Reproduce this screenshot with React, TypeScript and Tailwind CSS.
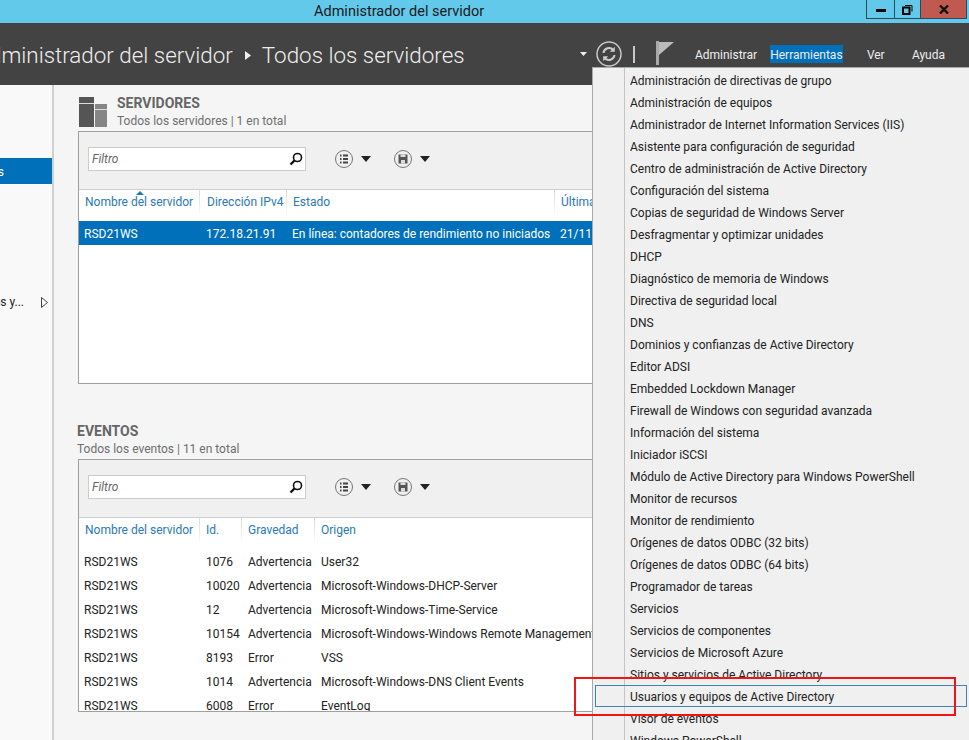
import React from "react";

/* ── data ── */

const toolItems = [
  "Administración de directivas de grupo",
  "Administración de equipos",
  "Administrador de Internet Information Services (IIS)",
  "Asistente para configuración de seguridad",
  "Centro de administración de Active Directory",
  "Configuración del sistema",
  "Copias de seguridad de Windows Server",
  "Desfragmentar y optimizar unidades",
  "DHCP",
  "Diagnóstico de memoria de Windows",
  "Directiva de seguridad local",
  "DNS",
  "Dominios y confianzas de Active Directory",
  "Editor ADSI",
  "Embedded Lockdown Manager",
  "Firewall de Windows con seguridad avanzada",
  "Información del sistema",
  "Iniciador iSCSI",
  "Módulo de Active Directory para Windows PowerShell",
  "Monitor de recursos",
  "Monitor de rendimiento",
  "Orígenes de datos ODBC (32 bits)",
  "Orígenes de datos ODBC (64 bits)",
  "Programador de tareas",
  "Servicios",
  "Servicios de componentes",
  "Servicios de Microsoft Azure",
  "Sitios y servicios de Active Directory",
  "Usuarios y equipos de Active Directory",
  "Visor de eventos",
  "Windows PowerShell",
];

const events = [
  ["1076", "Advertencia", "User32"],
  ["10020", "Advertencia", "Microsoft-Windows-DHCP-Server"],
  ["12", "Advertencia", "Microsoft-Windows-Time-Service"],
  ["10154", "Advertencia", "Microsoft-Windows-Windows Remote Management"],
  ["8193", "Error", "VSS"],
  ["1014", "Advertencia", "Microsoft-Windows-DNS Client Events"],
  ["6008", "Error", "EventLog"],
];

/* ── small drawings ── */

function SearchGlyph() {
  return (
    <svg width="14" height="14" viewBox="0 0 14 14" fill="none" stroke="#111">
      <circle cx="8.5" cy="5.5" r="4" strokeWidth="1.6" />
      <path d="M5.5 8.5 L1.5 12.5" strokeWidth="2.4" />
    </svg>
  );
}

function ListButton() {
  return (
    <svg width="18" height="18" viewBox="0 0 18 18" fill="none">
      <circle cx="9" cy="9" r="8.5" stroke="#777" />
      <path d="M5 5.5h1.5M5 9h1.5M5 12.5h1.5M8 5.5h5M8 9h5M8 12.5h5" stroke="#444" strokeWidth="1.8" />
    </svg>
  );
}

function SaveButton() {
  return (
    <svg width="18" height="18" viewBox="0 0 18 18" fill="none">
      <circle cx="9" cy="9" r="8.5" stroke="#777" />
      <path d="M4.5 4.5h9v9h-9z" fill="#555" />
      <path d="M6.5 4.5h5v2.5h-5zM7 10h4v3.5H7z" fill="#ddd" />
    </svg>
  );
}

function Caret() {
  return (
    <svg width="10" height="6" viewBox="0 0 10 6">
      <path d="M0 0h10L5 6z" fill="#222" />
    </svg>
  );
}

function ServersGlyph() {
  return (
    <svg width="29" height="30" viewBox="0 0 29 30" className="shrink-0">
      <path d="M0 0h15v30H0z" fill="#555" />
      <path d="M0 6h15v1H0z" fill="#ddd" />
      <path d="M16 7h12v23H16z" fill="#858585" />
      <path d="M16 12h12v1H16z" fill="#ddd" />
    </svg>
  );
}

function RefreshGlyph() {
  return (
    <svg width="26" height="26" viewBox="0 0 26 26" fill="none">
      <circle cx="13" cy="13" r="12" stroke="#c8c8c8" strokeWidth="1.5" />
      <path d="M7.5 12a5.6 5.6 0 0 1 9.8-3" stroke="#ccc" strokeWidth="2" />
      <path d="M18.8 5.8v5h-5z" fill="#ccc" />
      <path d="M18.5 14a5.6 5.6 0 0 1-9.8 3" stroke="#ccc" strokeWidth="2" />
      <path d="M7.2 20.2v-5h5z" fill="#ccc" />
    </svg>
  );
}

function FlagGlyph() {
  return (
    <svg width="18" height="24" viewBox="0 0 18 24" className="mb-[3px]">
      <path d="M0 0h3v24H0z" fill="#aaa" />
      <path d="M3 1h15L3 14z" fill="#bbb" />
    </svg>
  );
}

/* ── panel pieces ── */

function Toolbar() {
  return (
    <div className="flex h-[58px] items-center border-b border-[#cfcfcf] bg-[#f0f0f0] pb-[3px] pl-[9px]">
      <div className="flex h-[24px] w-[218px] items-center justify-between border border-[#ccc] bg-white pl-[3px] pr-[2px]">
        <span className="text-[#666] italic">Filtro</span>
        <SearchGlyph />
      </div>
      <div className="ml-[29px] flex items-center gap-[8px]">
        <ListButton />
        <Caret />
      </div>
      <div className="ml-[23px] flex items-center gap-[8px]">
        <SaveButton />
        <Caret />
      </div>
    </div>
  );
}

function HeaderCell({ label, className }: { label: string; className: string }) {
  return (
    <div className={`flex h-full items-center pb-[8px] pl-[6px] whitespace-nowrap text-[#2a78b8] ${className}`}>
      {label}
    </div>
  );
}

function Sep() {
  return <div className="h-[26px] w-px shrink-0 self-start bg-gradient-to-b from-[#d8d8d8] to-white" />;
}

function ServersPanel() {
  return (
    <div className="h-[253px] w-[700px] overflow-hidden border border-[#a0a0a0] bg-white">
      <Toolbar />
      <div className="relative flex h-[31px] items-center">
        <div className="absolute top-[1px] left-[57px] h-0 w-0 border-x-[4px] border-b-[4px] border-x-transparent border-b-[#1f76b8]" />
        <HeaderCell label="Nombre del servidor" className="w-[120px]" />
        <Sep />
        <HeaderCell label="Dirección IPv4" className="w-[86px] pl-[7px]" />
        <Sep />
        <HeaderCell label="Estado" className="w-[267px]" />
        <Sep />
        <HeaderCell label="Última" className="w-[100px]" />
      </div>
      <div className="flex h-[24px] items-center bg-[#0070bb] pt-px whitespace-nowrap text-white">
        <div className="w-[127px] pl-[5px]">RSD21WS</div>
        <div className="w-[86px]">172.18.21.91</div>
        <div className="w-[268px]">En línea: contadores de rendimiento no iniciados</div>
        <div>21/11/2016</div>
      </div>
    </div>
  );
}

function EventsPanel() {
  return (
    <div className="h-[253px] w-[700px] overflow-hidden border border-[#a0a0a0] bg-white">
      <Toolbar />
      <div className="flex h-[32px] items-center">
        <HeaderCell label="Nombre del servidor" className="w-[120px]" />
        <Sep />
        <HeaderCell label="Id." className="w-[41px]" />
        <Sep />
        <HeaderCell label="Gravedad" className="w-[72px]" />
        <Sep />
        <HeaderCell label="Origen" className="w-[200px]" />
      </div>
      {events.map(([id, level, source]) => (
        <div key={id} className="flex h-[24px] items-center whitespace-nowrap text-[#222]">
          <div className="w-[127px] pl-[5px]">RSD21WS</div>
          <div className="w-[42px]">{id}</div>
          <div className="w-[73px]">{level}</div>
          <div>{source}</div>
        </div>
      ))}
    </div>
  );
}

/* ── app ── */

export default function App() {
  return (
    <div className="relative flex h-screen w-full flex-col overflow-hidden bg-[#f5f5f5] font-['Roboto','Liberation_Sans',sans-serif] text-[12px]">
      {/* Title bar */}
      <div className="flex h-[23px] shrink-0 items-start justify-between bg-[#63c9eb]">
        <div className="pl-[314px] text-[14.5px] leading-[23px] text-[#1a1a1a]">Administrador del servidor</div>
        <div className="mr-[2px] flex h-[19px] border border-t-0 border-[#2c4a58]">
          <div className="flex w-[28px] items-center justify-center border-r border-[#2c4a58]">
            <div className="mt-[3px] h-[3px] w-[10px] bg-black" />
          </div>
          <div className="flex w-[26px] items-center justify-center border-r border-[#2c4a58]">
            <svg width="11" height="11" viewBox="0 0 11 11" fill="none" stroke="#000">
              <path d="M3 1.5h7v6" strokeWidth="1" />
              <path d="M1 3.5h6.5v6.5H1z" strokeWidth="2" />
            </svg>
          </div>
          <div className="flex w-[45px] items-center justify-center bg-[#c05a50]">
            <svg width="10" height="9" viewBox="0 0 10 9" fill="none" stroke="#111" strokeWidth="2.4">
              <path d="M1 0.5l8 8M9 0.5l-8 8" />
            </svg>
          </div>
        </div>
      </div>

      {/* Header */}
      <div className="flex h-[62px] shrink-0 items-center justify-between overflow-hidden bg-[#434343] pt-[4px] text-[#eee]">
        <div className="flex items-center whitespace-nowrap text-[22.4px] font-light">
          <span className="ml-[-25px]">Administrador del servidor</span>
          <svg width="6" height="9" viewBox="0 0 6 9" className="ml-[12px] mr-[11px]">
            <path d="M0 0l6 4.5L0 9z" fill="#eee" />
          </svg>
          <span>Todos los servidores</span>
        </div>
        <div className="mt-[-4px] mr-[24px] flex items-center">
          <svg width="7" height="4" viewBox="0 0 7 4" className="mr-[9px]">
            <path d="M0 0h7L3.5 4z" fill="#eee" />
          </svg>
          <RefreshGlyph />
          <div className="ml-[11px] mr-[21px] h-[17px] w-[2px] bg-[#c8c8c8]" />
          <FlagGlyph />
          <div className="ml-[21px] flex items-center">
            <span className="w-[75px] pt-[2px] leading-[16px]">Administrar</span>
            <span className="w-[73px] bg-[#0070bb] pt-[2px] text-center leading-[16px]">Herramientas</span>
            <span className="w-[69px] pt-[2px] pl-[24px] leading-[16px]">Ver</span>
            <span className="pt-[2px] leading-[16px]">Ayuda</span>
          </div>
        </div>
      </div>

      {/* Body */}
      <div className="flex min-h-0 flex-1">
        <div className="w-[54px] shrink-0 overflow-hidden border-r-2 border-[#d0d0d0] bg-[#f9f9f9] pt-[73px] text-[#222]">
          <div className="flex h-[26px] items-center justify-end bg-[#0070bb] pr-[48px] pt-[2px] whitespace-nowrap text-white">
            Todos los servidores
          </div>
          <div className="mt-[109px] flex items-center">
            <div className="flex w-[40px] justify-end pr-[16px] whitespace-nowrap">Servicios de archivos y...</div>
            <svg width="7" height="11" viewBox="0 0 7 11" className="ml-[1px]">
              <path d="M0.5 0.5l6 5-6 5z" fill="none" stroke="#444" />
            </svg>
          </div>
        </div>

        <div className="min-w-0 flex-1 overflow-hidden pt-[12px] pl-[24px]">
          <div className="flex h-[30px] items-start gap-[9px] pl-px">
            <ServersGlyph />
            <div className="mt-[-3px]">
              <div className="text-[14px] leading-[18px] font-bold text-[#666]">SERVIDORES</div>
              <div className="leading-[18px] text-[#6e6e6e]">Todos los servidores | 1 en total</div>
            </div>
          </div>
          <div className="mt-[4px]">
            <ServersPanel />
          </div>
          <div className="mt-[38px]">
            <div className="ml-[-1px] text-[14px] leading-[18px] font-bold text-[#666]">EVENTOS</div>
            <div className="ml-[-1px] leading-[18px] text-[#6e6e6e]">Todos los eventos | 11 en total</div>
          </div>
          <div className="mt-px">
            <EventsPanel />
          </div>
        </div>
      </div>

      {/* Tools menu */}
      <div className="absolute top-[67px] left-[592px] h-[700px] w-[400px] border border-[#a8a8a8] bg-[#f0f0f0] pt-[2px] whitespace-nowrap text-[#222]">
        <div className="absolute top-0 bottom-0 left-[31px] w-px bg-[#c4c4c4]" />
        {toolItems.map((item) => (
          <div key={item} className="flex h-[22px] items-center pl-[37px]">
            {item}
          </div>
        ))}
      </div>

      {/* Hover row + red annotation */}
      <div className="absolute top-[685px] left-[595px] h-[22px] w-[372px] border border-[#3f83b3]" />
      <div className="absolute top-[677px] left-[574px] h-[39px] w-[382px] border-2 border-[#f01414]" />
    </div>
  );
}
